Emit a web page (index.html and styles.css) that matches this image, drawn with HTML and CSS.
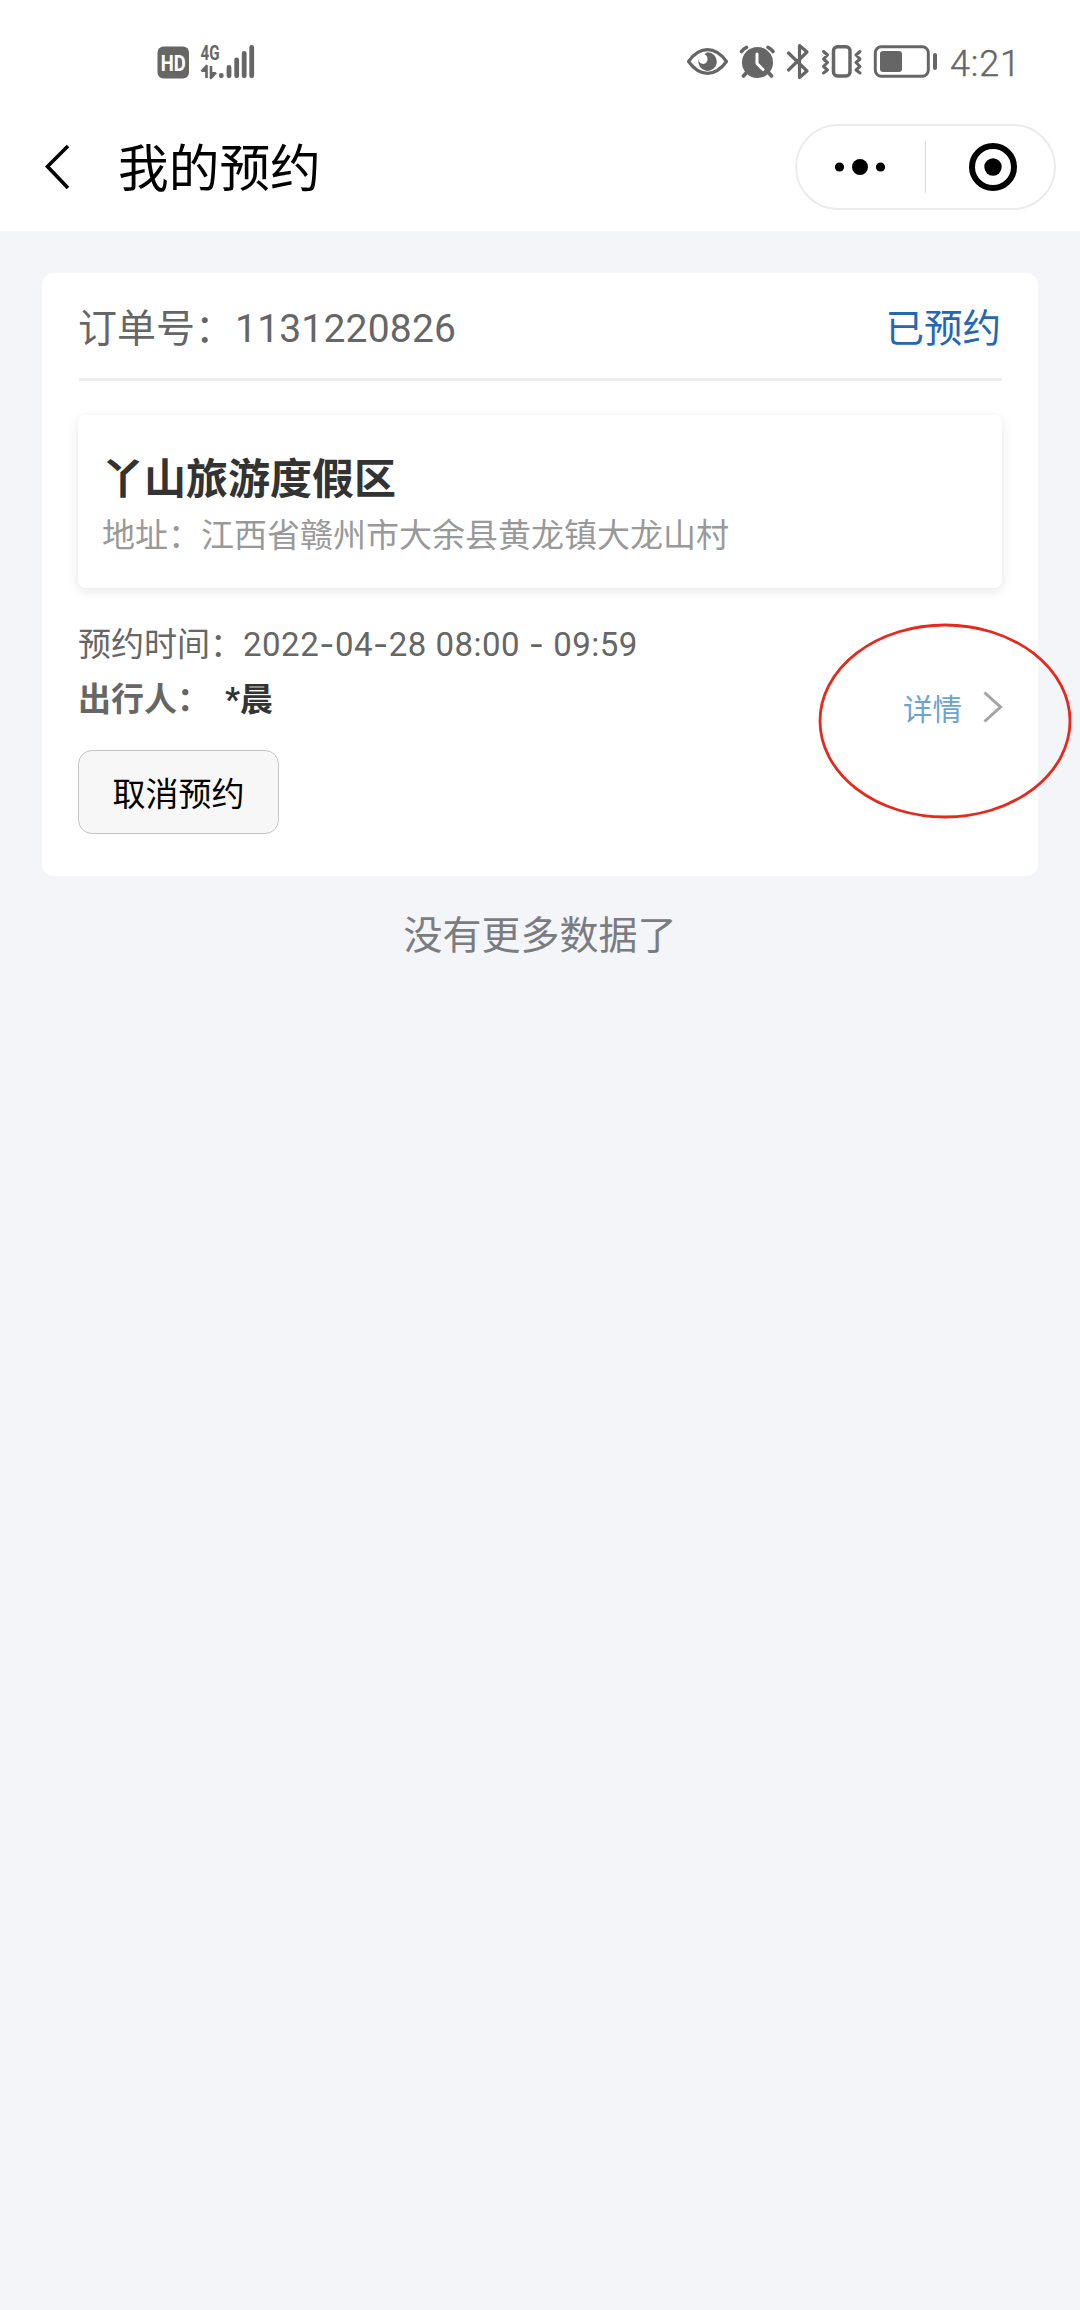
FILE: index.html
```html
<!DOCTYPE html>
<html lang="zh-CN">
<head>
<meta charset="utf-8">
<title>我的预约</title>
<link rel="stylesheet" href="styles.css">
</head>
<body>
<header class="top">
  <div class="status">
    <svg class="status-left" width="120" height="60" viewBox="146 32 120 60">
      <rect x="157.500" y="46.500" width="31.500" height="32" rx="6" fill="#666"/>
      <text class="hd" x="173.200" y="70.500" text-anchor="middle" textLength="25" lengthAdjust="spacingAndGlyphs">HD</text>
      <text class="net" x="200.500" y="60" textLength="19" lengthAdjust="spacingAndGlyphs">4G</text>
      <path d="M201.500 71.500L206.500 66V78M211 66V78L216 72.500" fill="none" stroke="#666" stroke-width="2.600" stroke-linejoin="round"/>
      <path d="M202 72h4.500v-5zM211 72h4.500l-4.500 5z" fill="#666"/>
      <path d="M221.300 75.500v.3M229 67.500v8.300M236.700 60v15.800M244.200 53.500v22.300M251.700 47.300v28.500" stroke="#666" stroke-width="4.800" stroke-linecap="round"/>
    </svg>
    <div class="status-right">
      <svg width="252" height="38" viewBox="686 42 252 38" fill="none" stroke="#666">
        <path d="M688.500 61.500Q697 49.700 707.500 49.700T726.500 61.500Q718 73.300 707.500 73.300T688.500 61.500Z" stroke-width="3.200" stroke-linejoin="round"/>
        <path d="M707.500 52.300A9.300 9.300 0 1 1 698.500 59.500C699 65 706.500 65.500 707.500 60Q708 56 704.500 54Z" fill="#666" stroke="none"/>
        <circle cx="757.500" cy="62.500" r="15.500" fill="#666" stroke="none"/>
        <path d="M741.500 51.500Q743.500 48.500 746.500 47.300M773 51.500Q771 48.500 768 47.300M747 72l-3.500 4M768 72l3.500 4" stroke-width="3.600" stroke-linecap="round"/>
        <path d="M757 54v9.500l6 6" stroke="#fff" stroke-width="3" stroke-linecap="round" stroke-linejoin="round"/>
        <path d="M788.500 53L807 71L799.500 77.500V45.500L807 52L788.500 70" stroke-width="3.200" stroke-linecap="round" stroke-linejoin="round"/>
        <rect x="833.500" y="46.700" width="16.500" height="29.300" rx="4" stroke-width="3.500"/>
        <path d="M823.500 51.500l4 3.500-4 4 4 3.500-4 4 4 3.500-4 3M860 51.500l-4 3.500 4 4-4 3.500 4 4-4 3.500 4 3" stroke-width="3" stroke-linejoin="round" stroke-linecap="round"/>
        <rect x="875.300" y="46.700" width="53" height="29.500" rx="6" stroke-width="3"/>
        <rect x="880" y="51" width="22" height="21" rx="3" fill="#666" stroke="none"/>
        <path d="M935 55v13" stroke-width="4" stroke-linecap="round"/>
      </svg>
      <span class="clock">4:21</span>
    </div>
  </div>
  <nav class="nav">
    <svg class="back" width="28" height="48" viewBox="0 0 28 48"><path d="M24 3L3.500 23.500L24 45" fill="none" stroke="#000" stroke-width="3.600"/></svg>
    <h1 class="title">我的预约</h1>
    <div class="capsule">
      <svg class="dots" width="52" height="20" viewBox="0 0 52 20"><circle cx="5.500" cy="10" r="4.600"/><circle cx="26" cy="10" r="8"/><circle cx="46.500" cy="10" r="4.600"/></svg>
      <i class="split"></i>
      <svg class="target" width="48" height="48" viewBox="0 0 48 48"><circle cx="24" cy="24" r="21" fill="none" stroke="#000" stroke-width="6"/><circle cx="24" cy="24" r="8.700"/></svg>
    </div>
  </nav>
</header>
<main>
  <section class="card">
    <div class="order">
      <span>订单号：<span class="order-no">1131220826</span></span>
      <span class="state">已预约</span>
    </div>
    <div class="place">
      <h2 class="place-name">丫山旅游度假区</h2>
      <p class="address">地址：江西省赣州市大余县黄龙镇大龙山村</p>
    </div>
    <div class="info">
      <div>
        <p class="line">预约时间：<span class="time">2022<b class="dash">-</b>04<b class="dash">-</b>28 08:00 <b class="dash">-</b> 09:59</span></p>
        <p class="line guest">出行人：<span class="guest-name">*晨</span></p>
      </div>
      <a class="detail">详情
        <svg width="22" height="34" viewBox="0 0 22 34"><path d="M2.500 2.500L18.500 17L2.500 31.500" fill="none" stroke="#a3a3a3" stroke-width="3"/></svg>
        <svg class="ring" width="256" height="198" viewBox="0 0 256 198"><ellipse cx="128" cy="99" rx="125" ry="96" fill="none" stroke="#e8281b" stroke-width="2.800"/></svg>
      </a>
    </div>
    <button class="cancel">取消预约</button>
  </section>
  <p class="end">没有更多数据了</p>
</main>
</body>
</html>
```
FILE: styles.css
```css
* { box-sizing: border-box; }
body {
  margin: 0;
  min-height: 2310px;
  background: #f3f5f9;
  font-family: Roboto, "Noto Sans CJK SC", sans-serif;
  color: #666;
}
h1, h2, p { margin: 0; }
svg { display: block; flex: none; }

.top { height: 231px; background: #fff; }
.status {
  display: flex;
  justify-content: space-between;
  height: 124px;
  padding: 32px 59px 0 146px;
}
.status-right { display: flex; gap: 12px; padding-top: 10px; }
.hd { font: 700 22px Roboto, sans-serif; fill: #fff; }
.net { font: 700 19.500px Roboto, sans-serif; fill: #666; }
.clock {
  width: 71px;
  font-size: 36px;
  font-weight: 300;
  line-height: 45px;
  white-space: nowrap;
  letter-spacing: .8px;
  -webkit-text-stroke: .4px #666;
}

.nav {
  display: flex;
  align-items: center;
  height: 86px;
  padding: 0 24px 0 44px;
}
.title {
  margin-left: 46px;
  padding-top: 5px;
  font-size: 50.700px;
  font-weight: 400;
  line-height: 86px;
  color: #000;
}
.capsule {
  display: flex;
  align-items: center;
  width: 261px;
  height: 86px;
  margin-left: auto;
  padding-left: 37px;
  border: 2px solid #ebebeb;
  border-radius: 43px;
}
.split { width: 1px; height: 52px; margin-left: 39px; background: #dcdcdc; }
.target { margin-left: 43px; }

.card {
  height: 603px;
  margin: 42px 42px 0;
  padding: 0 36px;
  border-radius: 12px;
  background: #fff;
}
.order {
  display: flex;
  justify-content: space-between;
  height: 108px;
  margin-left: 1px;
  border-bottom: 3px solid #eee;
  font-size: 39px;
  line-height: 112px;
}
.order > span { margin-left: -1px; }
.order-no { margin-left: 1px; letter-spacing: .2px; }
.state { margin-right: 1px; color: #2268b4; font-size: 38.500px; }
.place {
  height: 173px;
  margin-top: 34px;
  padding: 37px 24px 0;
  border-radius: 8px;
  background: #fff;
  box-shadow: 0 3px 12px rgba(0, 0, 0, .1);
}
.place-name { font-size: 42px; font-weight: 700; line-height: 56px; color: #333; }
.address { font-size: 33px; line-height: 56px; color: #999; }
.info { display: flex; justify-content: space-between; margin-top: 29px; }
.line { font-size: 33px; line-height: 55px; white-space: nowrap; }
.time { letter-spacing: .5px; }
.dash { font-family: Inter, sans-serif; font-weight: 400; }
.guest { font-weight: 700; }
.guest-name { margin-left: 15px; color: #333; }
.detail {
  position: relative;
  display: flex;
  align-items: center;
  gap: 20px;
  height: 46px;
  margin: 67px -2px 0 0;
  font-size: 29.500px;
  color: #6ba3d3;
}
.ring { position: absolute; left: -86px; top: -62px; }
.cancel {
  display: block;
  width: 201px;
  height: 84px;
  margin-top: 20px;
  padding: 0;
  border: 1.500px solid #c4c4c4;
  border-radius: 14px;
  background: #f7f7f7;
  font: inherit;
  font-size: 33px;
  color: #000;
}
.end { margin-top: 32px; font-size: 39px; line-height: 56px; text-align: center; color: #7a7c80; }
```
